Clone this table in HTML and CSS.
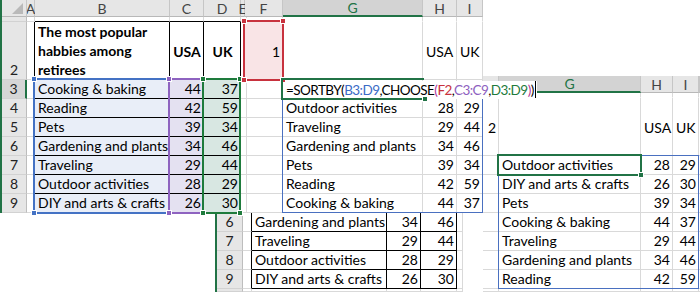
FILE: index.html
```html
<!DOCTYPE html>
<html>
<head>
<meta charset="utf-8">
<title>SORTBY with CHOOSE</title>
<link rel="stylesheet" href="styles.css">
</head>
<body>
<div class="stage">

  <!-- lower sheet: original table rows 6-9 -->
  <div class="win win-orig">
    <div class="sheet sheet-orig">
      <div class="rh">6</div><div class="c bkr"></div><div class="c bk">Gardening and plants</div><div class="c bk n">34</div><div class="c bk n">46</div><div class="c"></div>
      <div class="rh">7</div><div class="c bkr"></div><div class="c bk">Traveling</div><div class="c bk n">29</div><div class="c bk n">44</div><div class="c"></div>
      <div class="rh">8</div><div class="c bkr"></div><div class="c bk">Outdoor activities</div><div class="c bk n">28</div><div class="c bk n">29</div><div class="c"></div>
      <div class="rh">9</div><div class="c bkr"></div><div class="c bk">DIY and arts &amp; crafts</div><div class="c bk n">26</div><div class="c bk n">30</div><div class="c"></div>
      <div class="rh"></div><div class="c"></div><div class="c"></div><div class="c"></div><div class="c"></div><div class="c"></div>
    </div>
  </div>

  <!-- main sheet -->
  <div class="win win-main">
    <div class="sheet sheet-main">
      <div class="hd corner"></div><div class="hd">A</div><div class="hd">B</div><div class="hd">C</div><div class="hd">D</div><div class="hd">E</div><div class="hd">F</div><div class="hd sel">G</div><div class="hd">H</div><div class="hd">I</div>

      <div class="rh"></div><div class="c"></div><div class="c bkb"></div><div class="c bkb"></div><div class="c bkb"></div><div class="c nob"></div><div class="c nob"></div><div class="c nob"></div><div class="c nob"></div><div class="c nob"></div>

      <div class="rh">2</div><div class="c bkr"></div><div class="c bk bold wrap">The most popular habbies among retirees</div><div class="c bk bold mid ctr">USA</div><div class="c bk bold mid ctr">UK</div><div class="c"></div><div class="c ff n mid">1</div><div class="c"></div><div class="c mid">USA</div><div class="c mid">UK</div>

      <div class="rh act">3</div><div class="c bkr"></div><div class="c bk fb">Cooking &amp; baking</div><div class="c bk fc n">44</div><div class="c bk fd n">37</div><div class="c"></div><div class="c"></div><div class="c"></div><div class="c"></div><div class="c"></div>

      <div class="rh">4</div><div class="c bkr"></div><div class="c bk fb">Reading</div><div class="c bk fc n">42</div><div class="c bk fd n">59</div><div class="c"></div><div class="c"></div><div class="c">Outdoor activities</div><div class="c n">28</div><div class="c n">29</div>

      <div class="rh">5</div><div class="c bkr"></div><div class="c bk fb">Pets</div><div class="c bk fc n">39</div><div class="c bk fd n">34</div><div class="c"></div><div class="c"></div><div class="c">Traveling</div><div class="c n">29</div><div class="c n">44</div>

      <div class="rh">6</div><div class="c bkr"></div><div class="c bk fb">Gardening and plants</div><div class="c bk fc n">34</div><div class="c bk fd n">46</div><div class="c"></div><div class="c"></div><div class="c">Gardening and plants</div><div class="c n">34</div><div class="c n">46</div>

      <div class="rh">7</div><div class="c bkr"></div><div class="c bk fb">Traveling</div><div class="c bk fc n">29</div><div class="c bk fd n">44</div><div class="c"></div><div class="c"></div><div class="c">Pets</div><div class="c n">39</div><div class="c n">34</div>

      <div class="rh">8</div><div class="c bkr"></div><div class="c bk fb">Outdoor activities</div><div class="c bk fc n">28</div><div class="c bk fd n">29</div><div class="c"></div><div class="c"></div><div class="c">Reading</div><div class="c n">42</div><div class="c n">59</div>

      <div class="rh">9</div><div class="c bkr"></div><div class="c bk fb">DIY and arts &amp; crafts</div><div class="c bk fc n">26</div><div class="c bk fd n">30</div><div class="c"></div><div class="c"></div><div class="c">Cooking &amp; baking</div><div class="c n">44</div><div class="c n">37</div>
    </div>

    <div class="rng rng-b"><i class="k tl"></i><i class="k tr"></i><i class="k bl"></i><i class="k br"></i></div>
    <div class="rng rng-c"><i class="k tl"></i><i class="k tr"></i><i class="k bl"></i><i class="k br"></i></div>
    <div class="rng rng-d"><i class="k tl"></i><i class="k tr"></i><i class="k bl"></i><i class="k br"></i></div>
    <div class="rng rng-f"><i class="k tl"></i><i class="k tr"></i><i class="k bl"></i><i class="k br"></i></div>
    <div class="spill spill-main"></div>
    <div class="active active-main"><i class="k br"></i></div>
  </div>

  <!-- sorted sheet with F2 = 2 -->
  <div class="win win-sorted">
    <div class="sheet sheet-sorted">
      <div class="hd"></div><div class="hd sel">G</div><div class="hd">H</div><div class="hd">I</div><div class="hd"></div>
      <div class="c nob"></div><div class="c nob"></div><div class="c nob"></div><div class="c nob"></div><div class="c nob"></div>
      <div class="c n mid">2</div><div class="c"></div><div class="c mid">USA</div><div class="c mid">UK</div><div class="c"></div>
      <div class="c"></div><div class="c">Outdoor activities</div><div class="c n">28</div><div class="c n">29</div><div class="c"></div>
      <div class="c"></div><div class="c">DIY and arts &amp; crafts</div><div class="c n">26</div><div class="c n">30</div><div class="c"></div>
      <div class="c"></div><div class="c">Pets</div><div class="c n">39</div><div class="c n">34</div><div class="c"></div>
      <div class="c"></div><div class="c">Cooking &amp; baking</div><div class="c n">44</div><div class="c n">37</div><div class="c"></div>
      <div class="c"></div><div class="c">Traveling</div><div class="c n">29</div><div class="c n">44</div><div class="c"></div>
      <div class="c"></div><div class="c">Gardening and plants</div><div class="c n">34</div><div class="c n">46</div><div class="c"></div>
      <div class="c"></div><div class="c">Reading</div><div class="c n">42</div><div class="c n">59</div><div class="c"></div>
      <div class="c"></div><div class="c"></div><div class="c"></div><div class="c"></div><div class="c"></div>
    </div>
    <div class="spill spill-sorted"></div>
    <div class="active active-sorted"><i class="k br"></i></div>
  </div>

  <!-- formula being edited in G3 -->
  <div class="formula">=SORTBY(<span class="r-b">B3:D9</span>,CHOOSE<span class="r-p">(</span><span class="r-f">F2</span>,<span class="r-c">C3:C9</span>,<span class="r-d">D3:D9</span><span class="r-p">)</span>)<span class="caret"></span></div>

</div>
</body>
</html>
```

FILE: styles.css
```css
* { box-sizing: border-box; }
html, body { margin: 0; padding: 0; background: #fff; }
body { font-family: Lato, "Liberation Sans", sans-serif; color: #000; }

.stage { position: relative; width: 700px; height: 292px; overflow: hidden; background: #fff; }

.win { position: absolute; }
.win-main { left: 0; top: 0; }
.win-main::before, .win-orig::before {
  content: ""; position: absolute; left: 0; top: 0; bottom: 0; width: 2px; background: #217346;
}
.win-orig { left: 215px; top: 213px; }
.win-sorted { left: 483px; top: 76px; }

.sheet { display: grid; }
.sheet-main {
  margin-left: 2px;
  grid-template-columns: 25px 8px 135px 34px 37px 4px 38px 140px 34px 26px;
  grid-template-rows: 17px 5px 58px repeat(7, 19px);
}
.sheet-orig {
  margin-left: 2px;
  grid-template-columns: 26px 9px 135px 34px 36px 6px;
  grid-template-rows: repeat(4, 19px) 3px;
}
.sheet-sorted {
  grid-template-columns: 16px 142px 32px 26px 1px;
  grid-template-rows: 17px 5px 58px repeat(7, 19px) 3px;
}

.c {
  border-right: 1px solid #d9d9d9;
  border-bottom: 1px solid #d9d9d9;
  font-size: 14px;
  line-height: 18px;
  padding: 0 2px 0 3px;
  display: flex;
  align-items: flex-end;
  white-space: nowrap;
  overflow: hidden;
}
.nob { border-bottom-color: transparent; }
.n { justify-content: flex-end; }
.mid { align-items: center; padding-top: 3px; }
.ctr { justify-content: center; }
.bk { border-right-color: #000; border-bottom-color: #000; }
.bkr { border-right-color: #000; }
.bkb { border-bottom-color: #000; }
.bold { font-weight: 700; }
.wrap { white-space: normal; line-height: 19px; }

.fb { background: #e9eef8; }
.fc { background: #e4e1f1; }
.fd { background: #d8e7e2; }
.ff { background: #f9e4e6; }

.hd {
  background: #e6e6e6;
  border-right: 1px solid #c6c6c6;
  border-bottom: 1px solid #b8b8b8;
  font-size: 14px;
  color: #444;
  display: flex;
  align-items: center;
  justify-content: center;
  white-space: nowrap;
}
.hd.sel { background: #d3d3d3; color: #217346; border-bottom: 2px solid #217346; }
.corner { position: relative; }
.corner::after {
  content: ""; position: absolute; right: 3px; bottom: 2px;
  border-left: 11px solid transparent; border-bottom: 11px solid #b9b9b9;
}

.rh {
  background: #e6e6e6;
  border-right: 1px solid #bdbdbd;
  border-bottom: 1px solid #d2d2d2;
  font-size: 14px;
  line-height: 18px;
  color: #222;
  display: flex;
  align-items: flex-end;
  justify-content: center;
  overflow: hidden;
}
.rh.act { background: #d6d6d6; border-right: 2px solid #217346; }

/* coloured range outlines */
.rng { position: absolute; border: 2px solid; z-index: 2; }
.rng-b { left: 33px; top: 78px; width: 137px; height: 136px; border-color: #4472c4; }
.rng-c { left: 168px; top: 78px; width: 36px; height: 136px; border-color: #8e63c0; }
.rng-d { left: 202px; top: 78px; width: 39px; height: 136px; border-color: #1e7b3c; }
.rng-f { left: 243px; top: 20px; width: 41px; height: 61px; border-color: #c8323e; }

.k {
  position: absolute; width: 6px; height: 6px;
  border: 1px solid #fff; box-sizing: border-box;
}
.rng-b .k { background: #4472c4; }
.rng-c .k { background: #8e63c0; }
.rng-d .k { background: #1e7b3c; }
.rng-f .k { background: #c8323e; }
.k.tl { left: -4px; top: -4px; }
.k.tr { right: -4px; top: -4px; }
.k.bl { left: -4px; bottom: -4px; }
.k.br { right: -4px; bottom: -4px; }

.spill { position: absolute; border: 1px solid #4a70c0; z-index: 1; }
.spill-main { left: 282px; top: 99px; width: 201px; height: 114px; border-top: 0; }
.spill-sorted { left: 15px; top: 79px; width: 201px; height: 134px; }

.active { position: absolute; border: 2px solid #217346; z-index: 6; }
.active .k { background: #217346; }
.active-main { left: 281px; top: 78px; width: 143px; height: 22px; border-right: 0; }
.active-sorted { left: 14px; top: 78px; width: 145px; height: 22px; }

.formula {
  position: absolute; left: 285px; top: 81px; width: 252px; height: 18px;
  background: #fff; z-index: 5; overflow: hidden;
  font-size: 13.5px; letter-spacing: -0.55px; line-height: 18px; white-space: nowrap; padding-left: 1px;
}
.formula::before {
  content: ""; position: absolute; left: 139px; right: 0; top: -5px; height: 5px; background: #fff;
}
.r-b { color: #3a6bc6; }
.r-f { color: #c8323e; }
.r-c { color: #8e5fc0; }
.r-d { color: #1e7b3c; }
.r-p { color: #b0359a; }
.caret { display: inline-block; width: 1px; height: 17px; background: #000; vertical-align: top; margin-left: 1px; }
```
